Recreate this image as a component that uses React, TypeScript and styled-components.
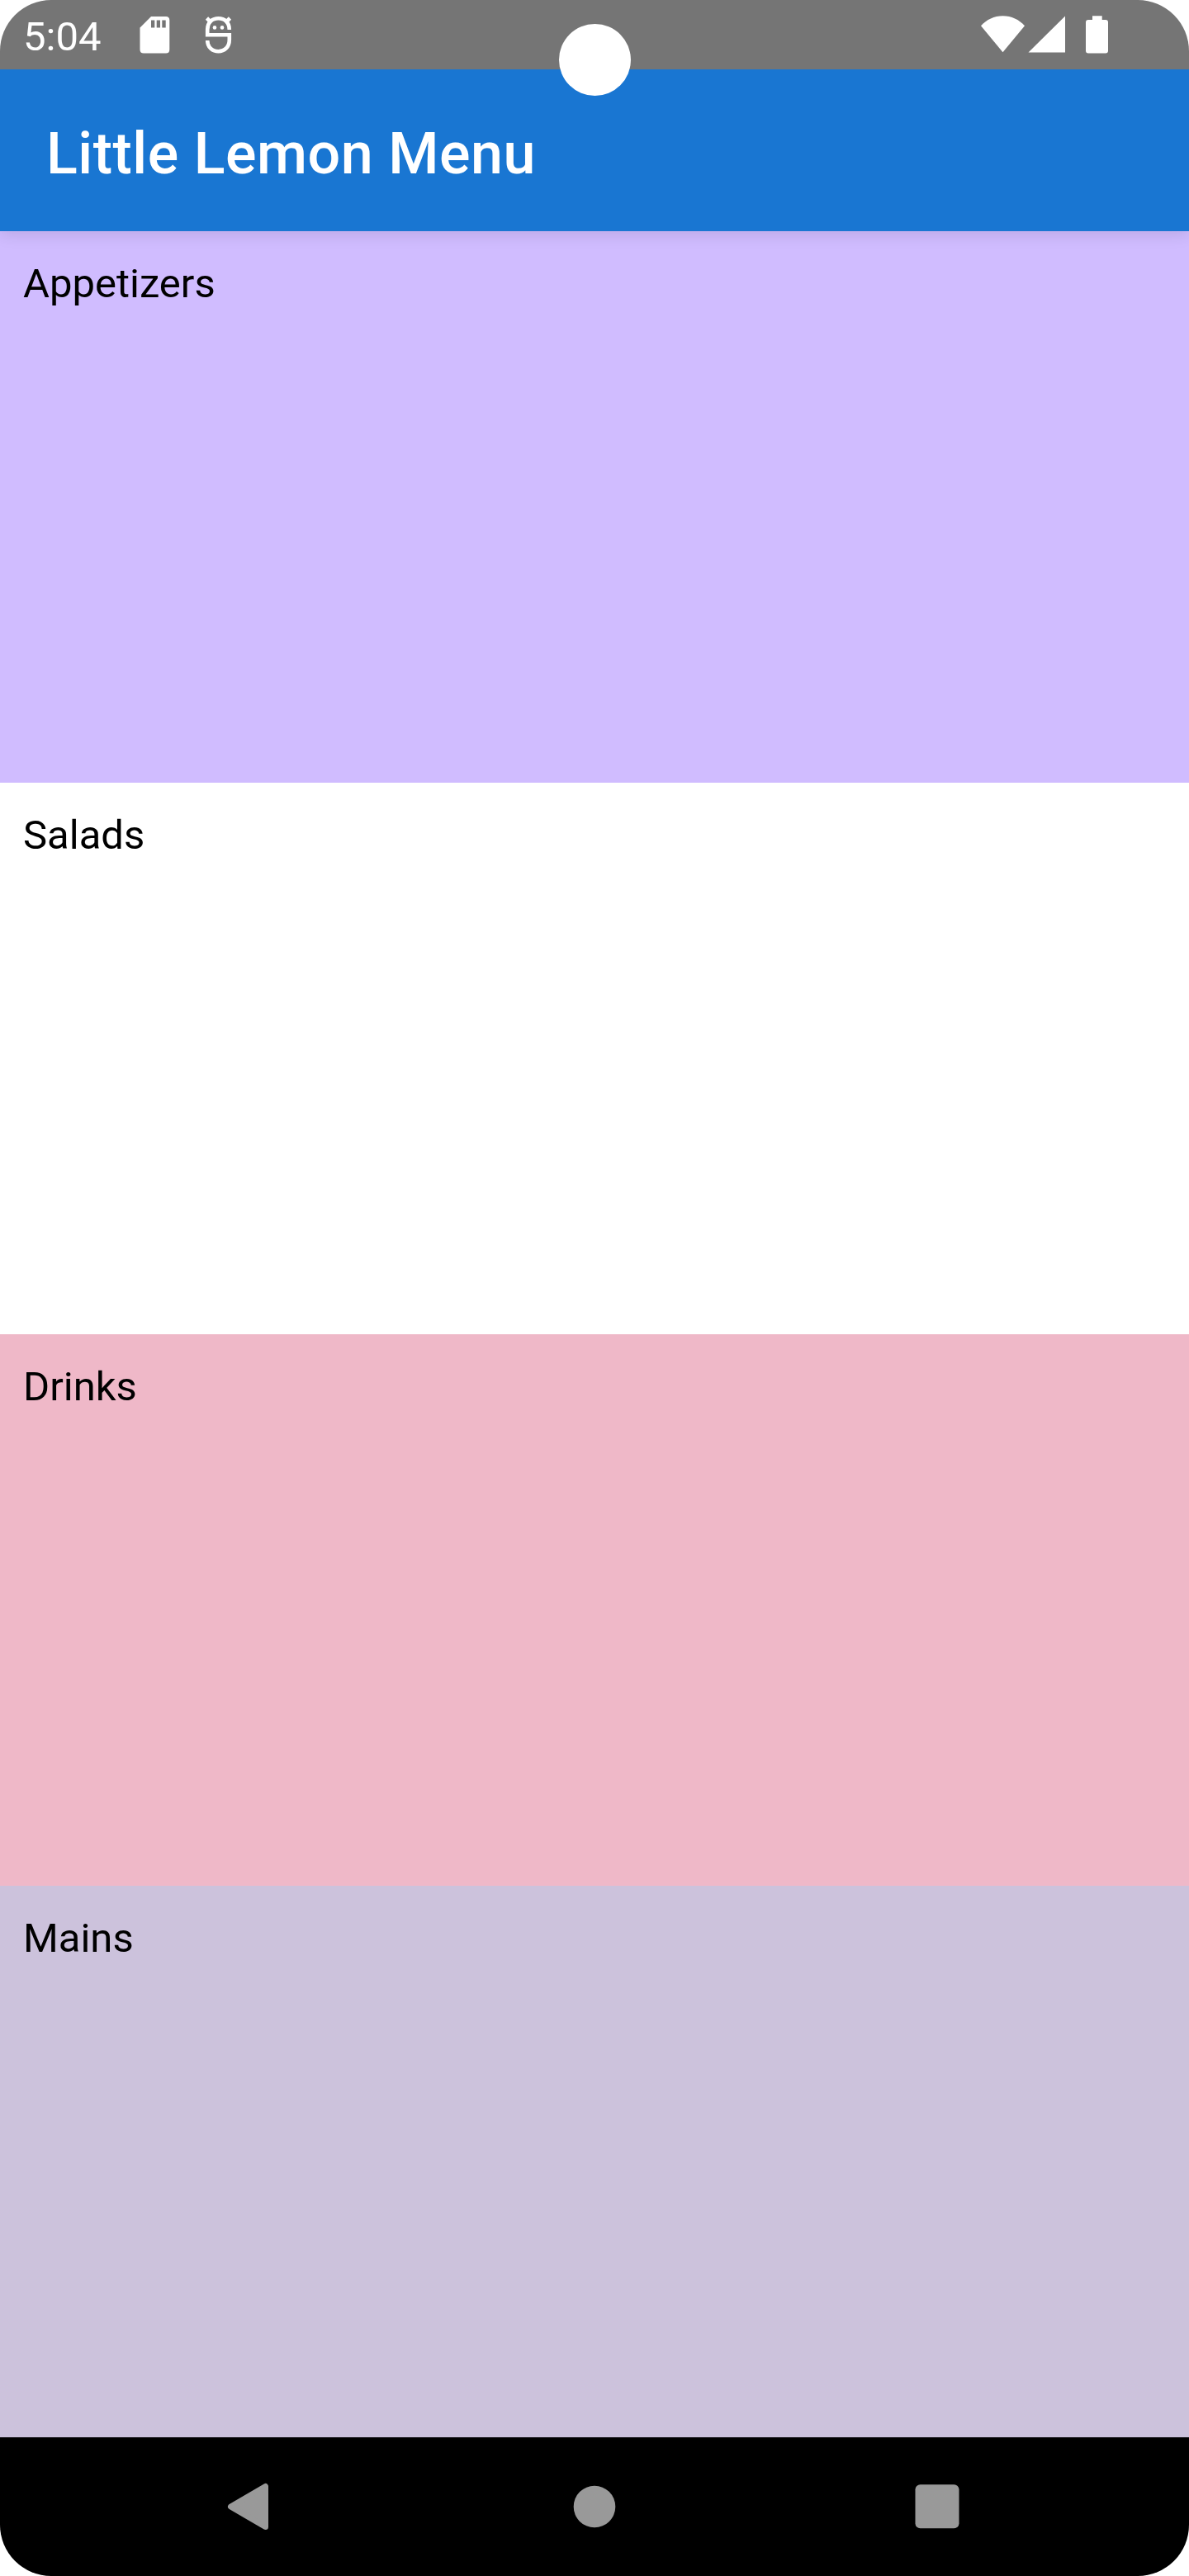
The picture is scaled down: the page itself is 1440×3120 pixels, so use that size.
import React from "react";
import styled, { createGlobalStyle } from "styled-components";

const GlobalStyle = createGlobalStyle`
  body {
    margin: 0;
    background: #ffffff;
    font-family: Roboto, "Noto Sans", sans-serif;
  }
`;

const Screen = styled.div`
  position: relative;
  display: flex;
  flex-direction: column;
  width: 1440px;
  height: 3120px;
  overflow: hidden;
  border-radius: 62px;
`;

const StatusBar = styled.header`
  display: flex;
  justify-content: space-between;
  height: 84px;
  background: #757575;
  color: #ffffff;
  z-index: 2;
`;

const StatusGroup = styled.div<{ $left?: number; $right?: number }>`
  display: flex;
  align-items: flex-start;
  padding: 0 ${(p) => p.$right ?? 0}px 0 ${(p) => p.$left ?? 0}px;
`;

const Clock = styled.time`
  width: 141px;
  padding-top: 16px;
  font-size: 49px;
  line-height: 57px;
  white-space: nowrap;
`;

const StatusIcon = styled.svg<{ $gap?: number }>`
  display: block;
  height: 84px;
  margin-left: ${(p) => p.$gap ?? 0}px;
`;

const Camera = styled.div`
  position: absolute;
  top: 29px;
  left: 677px;
  width: 87px;
  height: 87px;
  border-radius: 50%;
  background: #ffffff;
  z-index: 3;
`;

const AppBar = styled.div`
  display: flex;
  align-items: center;
  height: 196px;
  padding: 0 56px;
  background: #1976d2;
  box-shadow: 0 4px 18px rgba(0, 0, 0, 0.11);
  z-index: 1;
`;

const Title = styled.h1`
  margin: 0;
  padding-top: 8px;
  color: #ffffff;
  font-size: 70px;
  font-weight: 500;
  line-height: 82px;
  letter-spacing: 0.525px;
`;

const Menu = styled.main`
  display: flex;
  flex: 1;
  flex-direction: column;
`;

const Category = styled.section<{ $tone: string }>`
  flex: 1;
  padding: 28px;
  background: ${(p) => p.$tone};
`;

const CategoryName = styled.h2`
  margin: 0;
  padding-top: 7px;
  color: #000000;
  font-size: 49px;
  font-weight: 400;
  line-height: 57px;
`;

const NavBar = styled.nav`
  display: flex;
  align-items: center;
  justify-content: space-between;
  height: 168px;
  padding: 0 268px;
  background: #000000;
`;

const NavButton = styled.button`
  display: flex;
  padding: 0;
  border: 0;
  background: none;
`;

const categories = [
  { name: "Appetizers", tone: "#d0bcff" },
  { name: "Salads", tone: "#ffffff" },
  { name: "Drinks", tone: "#efb8c8" },
  { name: "Mains", tone: "#ccc2dc" },
];

export default function App() {
  return (
    <>
      <GlobalStyle />
      <Screen>
        <StatusBar>
          <StatusGroup $left={28}>
            <Clock>5:04</Clock>
            <StatusIcon width="37" viewBox="169 0 37 84" fill="#fff">
              <path
                fillRule="evenodd"
                d="M183 20H201Q205.300 20 205.300 24.500V60Q205.300 64.500 201 64.500H174Q169.500 64.500 169.500 60V33.500ZM183 24.500V33.500H187.300V24.500ZM189.700 24.500V33.500H194V24.500ZM196.300 24.500V33.500H200.700V24.500Z"
              />
            </StatusIcon>
            <StatusIcon width="34" viewBox="248 0 34 84" $gap={42} fill="none" stroke="#fff" strokeWidth="4.600">
              <path d="M277.800 36C277.800 27 272 22.300 264.500 22.300C257 22.300 251.200 27 251.200 36V42.300H277.800V48C277.800 57 272 62.200 264.500 62.200C257 62.200 251.200 57 251.200 49" />
              <path d="M250.500 22L256 27.500M278.500 22L273 27.500" />
              <circle cx="260" cy="33.400" r="2.300" fill="#fff" stroke="none" />
              <circle cx="269" cy="33.400" r="2.300" fill="#fff" stroke="none" />
            </StatusIcon>
          </StatusGroup>
          <StatusGroup $right={97}>
            <StatusIcon width="54" viewBox="1188 0 54 84" fill="#fff">
              <path d="M1214.500 63.300L1188 31.300C1195 23.500 1204 19.200 1214.500 19.200S1234 23.500 1241 31.300Z" />
            </StatusIcon>
            <StatusIcon width="45" viewBox="1245 0 45 84" $gap={3} fill="#fff">
              <path d="M1245.500 63.500L1290 19.500V63.500Z" />
            </StatusIcon>
            <StatusIcon width="28" viewBox="1315 0 28 84" $gap={25} fill="#fff">
              <path d="M1323 19.300H1334.700V24H1339Q1342 24 1342 27V61.500Q1342 64.500 1339 64.500H1318Q1315 64.500 1315 61.500V27Q1315 24 1318 24H1323Z" />
            </StatusIcon>
          </StatusGroup>
        </StatusBar>
        <Camera />
        <AppBar>
          <Title>Little Lemon Menu</Title>
        </AppBar>
        <Menu>
          {categories.map((c) => (
            <Category key={c.name} $tone={c.tone}>
              <CategoryName>{c.name}</CategoryName>
            </Category>
          ))}
        </Menu>
        <NavBar>
          <NavButton aria-label="Back">
            <svg width="64" height="64" viewBox="268 3004 64 64">
              <path
                d="M279.500 3036L321.500 3011.500V3060.500Z"
                fill="#999"
                stroke="#999"
                strokeWidth="7"
                strokeLinejoin="round"
              />
            </svg>
          </NavButton>
          <NavButton aria-label="Home">
            <svg width="64" height="64" viewBox="0 0 64 64">
              <circle cx="32" cy="32" r="25.300" fill="#999" />
            </svg>
          </NavButton>
          <NavButton aria-label="Overview">
            <svg width="64" height="64" viewBox="1108 3004 64 64">
              <rect x="1108.500" y="3009.300" width="53" height="53" rx="6" fill="#999" />
            </svg>
          </NavButton>
        </NavBar>
      </Screen>
    </>
  );
}
